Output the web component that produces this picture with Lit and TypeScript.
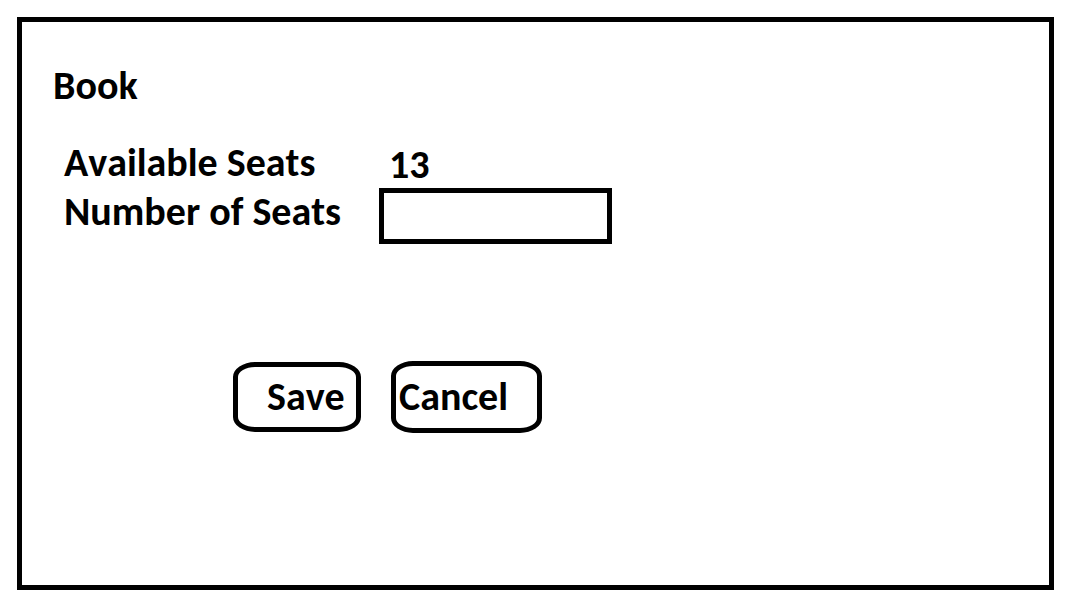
import { LitElement, html, css } from "lit";
import { customElement, property, state } from "lit/decorators.js";

@customElement("app-root")
export class AppRoot extends LitElement {
  @property({ type: Number }) available = 13;
  @state() private seats = "";

  static styles = css`
    :host {
      box-sizing: border-box;
      min-height: 100vh;
      padding: 17px 28px 26px 17px;
      display: flex;
      background: #fff;
      color: #000;
      font-family: Calibri, Carlito, Lato, sans-serif;
      font-size: 40px;
      line-height: 44px;
      font-weight: 700;
      font-kerning: none;
    }
    .panel {
      flex: 1;
      box-sizing: border-box;
      border: 5px solid #000;
      padding: 42px 31px;
    }
    .title {
      margin: 0;
      font-size: inherit;
      font-weight: inherit;
    }
    .fields {
      display: grid;
      grid-template-columns: 315px minmax(0, 233px);
      row-gap: 1px;
      margin-top: 33px;
      padding-left: 11px;
    }
    .value {
      padding: 2px 0 0 10px;
    }
    .label {
      padding-top: 2px;
    }
    .seats {
      box-sizing: border-box;
      width: 100%;
      height: 56px;
      border: 5px solid #000;
      border-radius: 0;
      background: #fff;
      padding: 0 8px;
      font: inherit;
      color: inherit;
      outline: none;
    }
    .actions {
      display: flex;
      align-items: center;
      gap: 30px;
      margin-top: 117px;
      padding-left: 180px;
    }
    .button {
      box-sizing: border-box;
      border: 5px solid #000;
      border-radius: 22px / 15px;
      background: #fff;
      padding: 0;
      font: inherit;
      font-kerning: none;
      color: inherit;
      text-align: left;
    }
    .save {
      width: 128px;
      height: 70px;
      padding-left: 29px;
    }
    .cancel {
      width: 151px;
      height: 72px;
      padding-left: 3px;
    }
  `;

  render() {
    return html`
      <form class="panel" @submit=${(e: Event) => e.preventDefault()}>
        <h1 class="title">Book</h1>
        <div class="fields">
          <span>Available Seats</span>
          <output class="value">${this.available}</output>
          <label class="label" for="seats">Number of Seats</label>
          <input
            id="seats"
            class="seats"
            type="text"
            inputmode="numeric"
            .value=${this.seats}
            @input=${(e: Event) => (this.seats = (e.target as HTMLInputElement).value)}
          />
        </div>
        <div class="actions">
          <button class="button save" type="submit">Save</button>
          <button class="button cancel" type="button" @click=${() => (this.seats = "")}>Cancel</button>
        </div>
      </form>
    `;
  }
}
